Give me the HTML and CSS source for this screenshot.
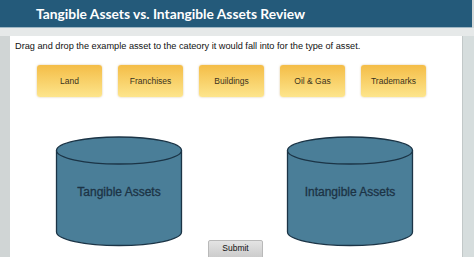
FILE: index.html
```html
<!DOCTYPE html>
<html>
<head>
<meta charset="utf-8">
<link rel="stylesheet" href="styles.css">
</head>
<body>
<div class="page">
  <header class="header"><h1 class="title">Tangible Assets vs. Intangible Assets Review</h1></header>
  <div class="strip"></div>
  <div class="main">
    <div class="gutter"></div>
    <section class="panel">
      <p class="instr">Drag and drop the example asset to the cateory it would fall into for the type of asset.</p>
      <div class="chips">
        <div class="chip">Land</div>
        <div class="chip">Franchises</div>
        <div class="chip">Buildings</div>
        <div class="chip">Oil &amp; Gas</div>
        <div class="chip">Trademarks</div>
      </div>
      <div class="bins">
        <div class="bin">
          <svg class="can" width="128" height="112" viewBox="0 0 128 112">
            <path d="M1.5 14.5 L1.5 96 A62.5 13.5 0 0 0 126.5 96 L126.5 14.5" fill="#4a7e98" stroke="#1b3446" stroke-width="1.3"/>
            <ellipse cx="64" cy="14.5" rx="62.5" ry="13.5" fill="#4a7e98" stroke="#1b3446" stroke-width="1.3"/>
          </svg>
          <div class="label">Tangible Assets</div>
        </div>
        <div class="bin">
          <svg class="can" width="128" height="112" viewBox="0 0 128 112">
            <path d="M1.5 14.5 L1.5 96 A62.5 13.5 0 0 0 126.5 96 L126.5 14.5" fill="#4a7e98" stroke="#1b3446" stroke-width="1.3"/>
            <ellipse cx="64" cy="14.5" rx="62.5" ry="13.5" fill="#4a7e98" stroke="#1b3446" stroke-width="1.3"/>
          </svg>
          <div class="label">Intangible Assets</div>
        </div>
      </div>
      <div class="actions"><button class="submit">Submit</button></div>
    </section>
    <div class="rail"></div>
  </div>
</div>
</body>
</html>
```
FILE: styles.css
```css
html, body {
  margin: 0;
  padding: 0;
}
body {
  width: 474px;
  height: 257px;
  overflow: hidden;
  background: #d3d8d8;
  font-family: "Liberation Sans", Arial, sans-serif;
}
.page {
  display: flex;
  flex-direction: column;
  height: 257px;
}
.header {
  height: 27px;
  background: #245a7a;
  margin-right: 2px;
  display: flex;
  align-items: center;
  border-bottom: 1px solid #9fb7c4;
}
.title {
  margin: 0 0 0 36px;
  font-family: Lato, "Open Sans", sans-serif;
  font-weight: 700;
  font-size: 13.8px;
  color: #ffffff;
  letter-spacing: 0;
}
.strip {
  height: 8px;
  background: #e6e9e9;
}
.main {
  flex: 1;
  display: flex;
  min-height: 0;
}
.gutter {
  width: 10px;
  background: #d0d5d5;
}
.panel {
  width: 452px;
  background: #ffffff;
  display: flex;
  flex-direction: column;
  overflow: visible;
}
.rail {
  width: 12px;
  background: #d6dddd;
  border-left: 1px solid #c2c8c8;
  box-sizing: border-box;
}
.instr {
  margin: 4px 0 0 5px;
  font-size: 9.2px;
  line-height: 12px;
  color: #111;
}
.chips {
  display: flex;
  gap: 16px;
  margin: 13px 0 0 27px;
}
.chip {
  width: 65px;
  height: 32px;
  box-sizing: border-box;
  border-radius: 3px;
  background: linear-gradient(#f4bd47, #fde58c);
  box-shadow: 0 0 2px rgba(180, 130, 40, 0.5);
  display: flex;
  align-items: center;
  justify-content: center;
  font-size: 8.5px;
  color: #3a3320;
}
.bins {
  display: flex;
  gap: 103px;
  margin: 39px 0 0 45px;
  height: 104px;
}
.bin {
  display: grid;
  width: 128px;
  height: 112px;
}
.can, .label {
  grid-area: 1 / 1;
}
.label {
  align-self: start;
  justify-self: center;
  margin-top: 49px;
  font-size: 12px;
  color: #1c3345;
  -webkit-text-stroke: 0.3px #1c3345;
}
.actions {
  display: flex;
  justify-content: center;
  padding-right: 1px;
}
.submit {
  width: 55px;
  height: 20px;
  padding: 0 0 4px;
  border: 1px solid #b9b9b9;
  border-radius: 2px;
  background: linear-gradient(#e4e4e4, #c9c9c9);
  font-family: "Liberation Sans", Arial, sans-serif;
  font-size: 8.5px;
  color: #111;
}
```
